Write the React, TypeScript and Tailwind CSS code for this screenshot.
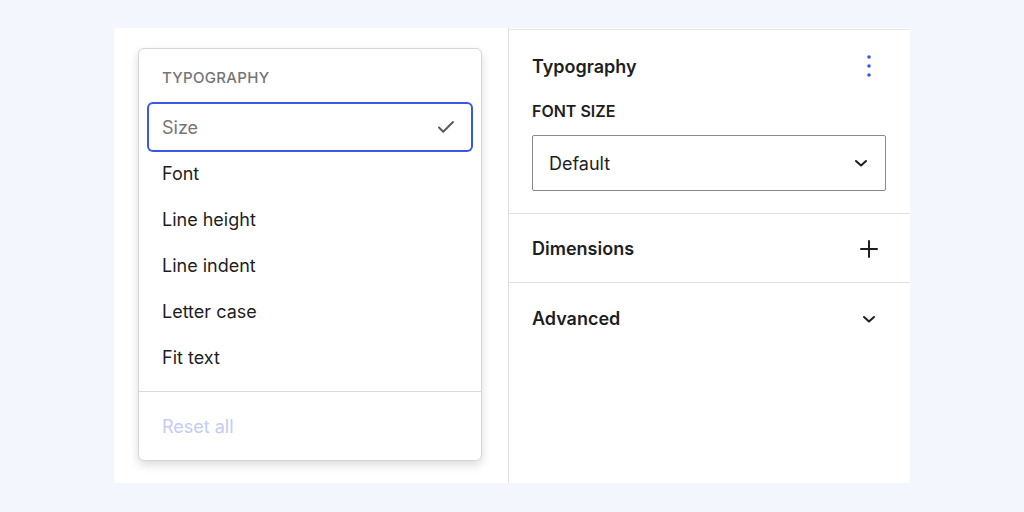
import React from "react";

const items = ["Font", "Line height", "Line indent", "Letter case", "Fit text"];

function Check() {
  return (
    <svg width="24" height="24" viewBox="0 0 24 24" fill="none">
      <path d="M5 12.5l4.2 4.2L19 7" stroke="#5a5a5a" strokeWidth="2" strokeLinecap="round" strokeLinejoin="round" />
    </svg>
  );
}

function Chevron({ size = 24 }: { size?: number }) {
  return (
    <svg width={size} height={size} viewBox="0 0 24 24" fill="none">
      <path d="M7 10l5 4.5 5-4.5" stroke="#1e1e1e" strokeWidth="2" strokeLinecap="round" strokeLinejoin="round" />
    </svg>
  );
}

function Plus() {
  return (
    <svg width="24" height="24" viewBox="0 0 24 24" fill="none">
      <path d="M12 4v16M4 12h16" stroke="#1e1e1e" strokeWidth="2" strokeLinecap="round" />
    </svg>
  );
}

function Dots() {
  return (
    <svg width="24" height="24" viewBox="0 0 24 24" fill="#3858e9">
      <circle cx="12" cy="3" r="1.8" />
      <circle cx="12" cy="12" r="1.8" />
      <circle cx="12" cy="21" r="1.8" />
    </svg>
  );
}

export default function App() {
  return (
    <div
      className="w-[1024px] h-[512px] bg-[#f3f6fd] pl-[114px] pt-[28px] text-[#1e1e1e]"
      style={{ fontFamily: "Inter, 'Noto Sans', sans-serif" }}
    >
      <div className="flex w-[796px] h-[455px] bg-white">
        {/* Left zone with popover */}
        <div className="w-[394px] pl-[24px] pt-[20px]">
          <div className="w-[344px] h-[413px] border border-[#d6d6d6] rounded-[6px] bg-white shadow-[0_4px_10px_rgba(0,0,0,0.14)] flex flex-col">
            <div className="px-[10px] pt-[20px]">
              <div className="pl-[13px] h-[16px] flex items-center text-[15px] font-medium tracking-[0.02em] text-[#757575] uppercase leading-none">
                Typography
              </div>
              <div className="mt-[19px] flex flex-col">
                <div className="h-[46px] flex items-center justify-between pl-[13px] pr-[13px] rounded-[4px] ring-2 ring-[#3858e9] text-[18px] text-[#757575]">
                  <span>Size</span>
                  <Check />
                </div>
                {items.map((t) => (
                  <div key={t} className="h-[46px] flex items-center pl-[13px] text-[18px] text-[#1e1e1e]">
                    {t}
                  </div>
                ))}
              </div>
            </div>
            <div className="mt-[11px] border-t border-[#dcdcdc] flex-1 flex items-center pl-[23px] text-[18px] text-[#c3cbf7]">
              Reset all
            </div>
          </div>
        </div>

        {/* Right zone: settings panel */}
        <div className="flex-1 flex flex-col border-l border-[#e0e0e0]">
          <div className="mt-[1px] border-t border-[#e6e6e6]" />
          <div className="pl-[23px] pr-[24px] pt-[22px] pb-[22px] border-b border-[#e0e0e0]">
            <div className="h-[28px] flex items-center justify-between">
              <span className="text-[18px] font-semibold">Typography</span>
              <div className="w-[34px] flex justify-center">
                <Dots />
              </div>
            </div>
            <div className="mt-[21px] h-[20px] flex items-center text-[16px] font-semibold uppercase">
              Font size
            </div>
            <div className="mt-[14px] h-[56px] border border-[#8a8a8a] rounded-[2px] flex items-center justify-between pl-[16px] pr-[12px]">
              <span className="text-[18px]">Default</span>
              <Chevron />
            </div>
          </div>
          <div className="h-[69px] pt-[1px] pl-[23px] pr-[24px] border-b border-[#e0e0e0] flex items-center justify-between">
            <span className="text-[18px] font-semibold">Dimensions</span>
            <div className="w-[34px] flex justify-center">
              <Plus />
            </div>
          </div>
          <div className="h-[70px] pt-[1px] pl-[23px] pr-[24px] flex items-center justify-between">
            <span className="text-[18px] font-semibold">Advanced</span>
            <div className="w-[34px] flex justify-center">
              <Chevron />
            </div>
          </div>
        </div>
      </div>
    </div>
  );
}
